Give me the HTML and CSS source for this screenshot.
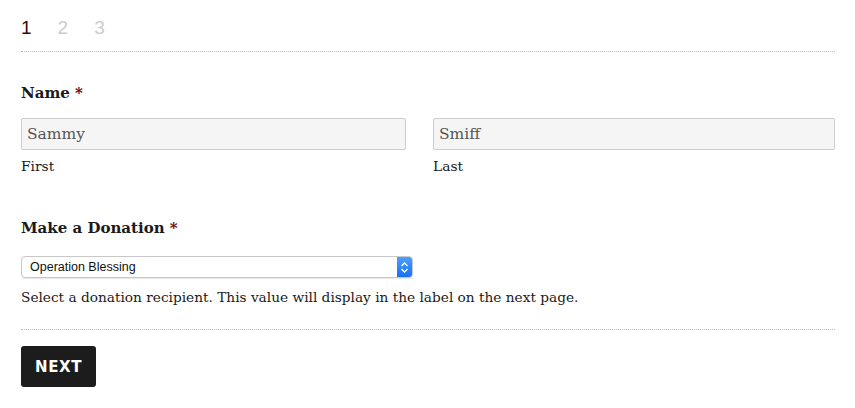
FILE: index.html
```html
<!DOCTYPE html>
<html>
<head>
<meta charset="utf-8">
<link rel="stylesheet" href="styles.css">
</head>
<body>
<form class="form">
  <div class="steps">
    <span class="step current">1</span>
    <span class="step">2</span>
    <span class="step">3</span>
  </div>
  <div class="field name-field">
    <div class="label">Name <span class="req">*</span></div>
    <div class="name-row">
      <div class="sub">
        <div class="input">Sammy</div>
        <div class="sublabel">First</div>
      </div>
      <div class="sub">
        <div class="input">Smiff</div>
        <div class="sublabel">Last</div>
      </div>
    </div>
  </div>
  <div class="field donation-field">
    <div class="label">Make a Donation <span class="req">*</span></div>
    <div class="select">
      <span class="select-text">Operation Blessing</span>
      <span class="select-btn">
        <svg width="9" height="13" viewBox="0 0 9 13"><path d="M1.5 5 L4.5 2 L7.5 5 M1.5 8 L4.5 11 L7.5 8" fill="none" stroke="#fff" stroke-width="1.4"/></svg>
      </span>
    </div>
    <div class="help">Select a donation recipient. This value will display in the label on the next page.</div>
  </div>
  <div class="footer">
    <button type="button" class="next">NEXT</button>
  </div>
</form>
</body>
</html>
```
FILE: styles.css
```css
html, body { margin: 0; padding: 0; background: #fff; }
body { font-family: "DejaVu Serif", serif; color: #1a1a1a; }
.form { padding: 15px 20px 0 21px; width: 814px; }
.steps { display: flex; gap: 26px; font-family: "Liberation Sans", Arial, sans-serif; font-size: 19px; height: 26px; border-bottom: 1px dotted #bbb; padding-bottom: 10px; }
.step { color: #ccc; line-height: 26px; }
.step.current { color: #3a0a0a; }
.name-field { padding-top: 31px; }
.label { font-weight: bold; font-size: 15px; line-height: 20px; color: #1a1a1a; }
.req { color: #7a0000; }
.name-row { display: flex; gap: 27px; margin-top: 15px; }
.sub { flex: 1; }
.name-row .sub:first-child { flex: 0 0 385px; }
.input { height: 30px; border: 1px solid #ccc; border-radius: 2px; background: #f5f5f5; font-size: 15.5px; color: #555; line-height: 30px; padding-left: 5px; }
.sublabel { font-size: 13.8px; line-height: 20px; margin-top: 6px; }
.donation-field { padding-top: 42px; }
.select { margin-top: 18px; width: 390px; height: 20px; border: 1px solid #c8c8c8; border-radius: 4px; display: flex; justify-content: space-between; align-items: stretch; box-shadow: 0 1px 1px rgba(0,0,0,0.1); overflow: hidden; }
.select-text { font-family: "Liberation Sans", Arial, sans-serif; font-size: 12.5px; line-height: 20px; padding-left: 8px; color: #111; }
.select-btn { width: 15px; background: linear-gradient(#4aa0ff, #1a6ff5); display: flex; align-items: center; justify-content: center; }
.help { font-size: 13.7px; line-height: 20px; margin-top: 9px; }
.footer { border-top: 1px dotted #bbb; margin-top: 22px; padding-top: 16px; }
.next { background: #1c1c1c; color: #fff; border: none; border-radius: 3px; width: 75px; height: 41px; font-family: "DejaVu Sans", sans-serif; font-weight: bold; font-size: 15px; letter-spacing: 0.6px; padding: 0; }
```
